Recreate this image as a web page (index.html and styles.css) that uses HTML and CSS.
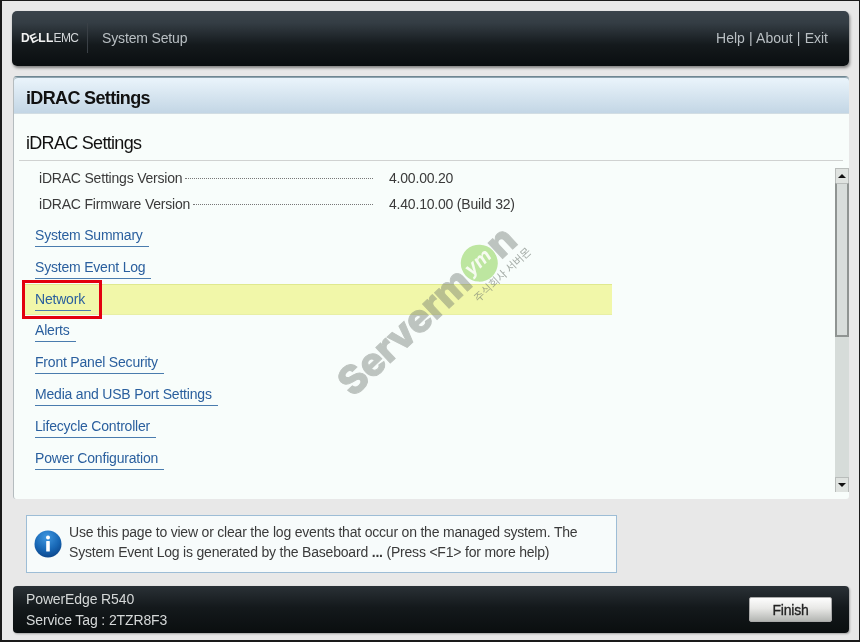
FILE: index.html
```html
<!DOCTYPE html>
<html lang="en">
<head>
<meta charset="utf-8">
<title>iDRAC Settings</title>
<link rel="stylesheet" href="styles.css">
</head>
<body>
<div class="screen">
  <header class="topbar">
    <div class="logo"><span class="logo-dell">D<span class="logo-e">E</span>LL</span><span class="logo-emc">EMC</span></div>
    <div class="app-name">System Setup</div>
    <nav class="top-links">Help | About | Exit</nav>
  </header>

  <main class="panel">
    <h1 class="panel-title">iDRAC Settings</h1>
    <h2 class="panel-heading">iDRAC Settings</h2>
    <div class="panel-scroll">
      <div class="content">
        <div class="info-row"><span class="info-label">iDRAC Settings Version</span><span class="leader"></span><span class="info-value">4.00.00.20</span></div>
        <div class="info-row"><span class="info-label">iDRAC Firmware Version</span><span class="leader"></span><span class="info-value">4.40.10.00 (Build 32)</span></div>
        <ul class="menu">
          <li class="menu-item"><a class="menu-link">System Summary</a></li>
          <li class="menu-item"><a class="menu-link">System Event Log</a></li>
          <li class="menu-item is-current"><a class="menu-link">Network</a></li>
          <li class="menu-item"><a class="menu-link">Alerts</a></li>
          <li class="menu-item"><a class="menu-link">Front Panel Security</a></li>
          <li class="menu-item"><a class="menu-link">Media and USB Port Settings</a></li>
          <li class="menu-item"><a class="menu-link">Lifecycle Controller</a></li>
          <li class="menu-item"><a class="menu-link">Power Configuration</a></li>
        </ul>
      </div>
      <div class="scrollbar">
        <div class="scroll-btn"><span class="arrow-up"></span></div>
        <div class="scroll-track"><div class="scroll-thumb"></div></div>
        <div class="scroll-btn"><span class="arrow-down"></span></div>
      </div>
    </div>
    <div class="callout-box"></div>
    <div class="watermark">
      <span class="wm-text">Serverm</span><span class="wm-circle">ym</span><span class="wm-text">n</span>
    </div>
    <div class="wm-sub">주식회사 서버몬</div>
  </main>

  <section class="help">
    <svg class="help-icon" viewBox="0 0 28 28" width="28" height="28" aria-hidden="true">
      <defs>
        <radialGradient id="ball" cx="45%" cy="25%" r="80%">
          <stop offset="0" stop-color="#3f97e0"/>
          <stop offset="0.6" stop-color="#1766b4"/>
          <stop offset="1" stop-color="#0b4286"/>
        </radialGradient>
      </defs>
      <circle cx="14" cy="14" r="13.5" fill="url(#ball)"/>
      <circle cx="14" cy="7.6" r="2" fill="#fff"/>
      <rect x="12.2" y="11" width="3.6" height="10.5" rx="0.6" fill="#fff"/>
    </svg>
    <p class="help-text">Use this page to view or clear the log events that occur on the managed system. The<br>System Event Log is generated by the Baseboard <b>...</b> (Press &lt;F1&gt; for more help)</p>
  </section>

  <footer class="bottombar">
    <div class="machine">
      <div>PowerEdge R540</div>
      <div>Service Tag : 2TZR8F3</div>
    </div>
    <button class="finish" type="button">Finish</button>
  </footer>
</div>
</body>
</html>
```
FILE: styles.css
```css
* { box-sizing: border-box; }
html, body { margin: 0; padding: 0; }
body {
  width: 860px;
  height: 642px;
  overflow: hidden;
  background: #1a1a1a;
  font-family: "Liberation Sans", Arial, sans-serif;
  font-size: 14px;
  color: #3a3a3a;
}
.screen {
  width: 857px;
  height: 639px;
  margin: 1px 0 0 2px;
  background: #e8e8e8;
  padding: 10px 10px 0 10px;
  display: flex;
  flex-direction: column;
  filter: blur(0.35px);
}
.topbar {
  height: 55px;
  flex: none;
  display: flex;
  align-items: center;
  padding: 0 21px 2px 9px;
  border-radius: 5px;
  background: linear-gradient(#3a434b 0, #343d44 22%, #14191c 62%, #0a0e10 100%);
  box-shadow: 1px 2px 3px rgba(0,0,0,.45);
}
.logo {
  width: 67px;
  height: 30px;
  display: flex;
  align-items: center;
  border-right: 1px solid #3a4046;
  font-size: 12px;
  color: #d4d7da;
  white-space: nowrap;
}
.logo-dell { font-weight: 700; letter-spacing: 0.3px; color: #f2f2f2; }
.logo-e { display: inline-block; transform: rotate(-25deg); }
.logo-emc { letter-spacing: -0.6px; }
.app-name { margin-left: 14px; color: #b9bfc3; letter-spacing: -0.15px; }
.top-links { margin-left: auto; color: #b9bfc3; word-spacing: 0.3px; }

.panel {
  position: relative;
  height: 423px;
  margin-top: 10px;
  margin-left: 1px;
  flex: none;
  background: #f8fdfb;
  border-top: 1px solid #6f8792;
  border-left: 1px solid #b5bcbf;
  border-radius: 4px 4px 3px 3px;
  display: flex;
  flex-direction: column;
}
.panel-title {
  margin: 0;
  height: 37px;
  flex: none;
  padding: 3px 0 0 12px;
  font-size: 18px;
  line-height: 34px;
  font-weight: 700;
  letter-spacing: -0.65px;
  color: #111;
  background: linear-gradient(#eaf4fb, #c3d6e5);
  border-top: 1px solid #8fa5b0;
  border-bottom: 1px solid #d2dde3;
  border-radius: 4px 4px 0 0;
}
.panel-heading {
  margin: 0 6px 0 5px;
  height: 47px;
  flex: none;
  padding: 17px 0 0 7px;
  font-size: 18px;
  line-height: 24px;
  font-weight: 400;
  letter-spacing: -0.7px;
  color: #111;
  border-bottom: 1px solid #d0d2d1;
}
.panel-scroll {
  flex: 1;
  display: flex;
  padding: 4px 0 7px 0;
  min-height: 0;
}
.content { flex: 1; min-width: 0; padding-left: 8px; letter-spacing: -0.2px; }
.info-row {
  display: flex;
  align-items: center;
  width: 352px;
  height: 26px;
  padding-left: 17px;
  line-height: 20px;
}
.info-label { white-space: nowrap; }
.leader {
  width: 0;
  flex: 1;
  margin: 0 1px 0 3px;
  border-bottom: 1px dotted #777;
}
.info-value { position: relative; left: 15px; width: 0; white-space: nowrap; }
.menu { list-style: none; margin: 0; padding: 3px 0 0; }
.menu-item {
  width: 590px;
  height: 31.8px;
  padding: 7px 0 0 13px;
}
.menu-link {
  display: inline-block;
  height: 20px;
  line-height: 16px;
  padding-right: 6px;
  border-bottom: 1.5px solid #4a7cae;
  color: #2a5f9e;
}
.is-current {
  background: #f1f7a9;
  border-top: 1px solid #dfe98f;
  border-bottom: 1px solid #e8efa5;
  padding-top: 6px;
}
.scrollbar {
  width: 14px;
  flex: none;
  margin-top: 3px;
  display: flex;
  flex-direction: column;
  background: #d6dcd9;
}
.scroll-btn {
  height: 15px;
  flex: none;
  background: #dfe3e0;
  border: 1px solid #b9bdbb;
  border-bottom: 0;
  display: flex;
  align-items: center;
  justify-content: center;
}
.scroll-track { flex: 1; }
.scroll-thumb {
  height: 154px;
  background: #d8dddb;
  border: 2px solid #8f9492;
  border-top: 1px solid #b9bdbb;
}
.arrow-up { border: 4px solid transparent; border-top: 0; border-bottom: 4px solid #111; }
.arrow-down { border: 4px solid transparent; border-bottom: 0; border-top: 4px solid #111; }

.callout-box {
  position: absolute;
  left: 8px;
  top: 203px;
  width: 80px;
  height: 39px;
  border: 3px solid #e3000f;
}
.watermark {
  position: absolute;
  left: 329px;
  top: 290px;
  display: flex;
  align-items: center;
  transform: rotate(-43deg);
  transform-origin: left center;
  font-family: Inter, "Liberation Sans", sans-serif;
  font-size: 39px;
  font-weight: 800;
  line-height: 40px;
  pointer-events: none;
  white-space: nowrap;
}
.wm-text { color: #6e7670; opacity: .42; -webkit-text-stroke: 1px #6e7670; }
.wm-circle {
  width: 37px;
  height: 37px;
  margin: 4px 0 0 0;
  border-radius: 50%;
  background: rgba(170,222,130,.75);
  color: #f6fbf0;
  font-size: 19px;
  font-weight: 700;
  font-style: italic;
  line-height: 34px;
  text-align: center;
  flex: none;
}
.wm-sub {
  position: absolute;
  left: 461px;
  top: 214px;
  transform: rotate(-43deg);
  transform-origin: left center;
  font-family: "Noto Sans CJK KR", sans-serif;
  font-size: 11px;
  color: rgba(110,118,112,.6);
  white-space: nowrap;
}

.help {
  width: 591px;
  height: 58px;
  flex: none;
  margin: 16px 0 0 14px;
  display: flex;
  align-items: center;
  background: #f7fbfb;
  border: 1px solid #9dbdd6;
  padding: 0 0 0 7px;
}
.help-icon { flex: none; }
.help-text {
  margin: 0 0 4px 7px;
  line-height: 20px;
  white-space: nowrap;
  letter-spacing: -0.2px;
}
.bottombar {
  height: 47px;
  flex: none;
  margin: 13px 0 0 1px;
  display: flex;
  align-items: center;
  justify-content: space-between;
  padding: 0 17px 0 13px;
  border-radius: 4px;
  background: linear-gradient(#2a3136 0, #14191c 45%, #0a0e0f 100%);
  box-shadow: 1px 1px 2px rgba(0,0,0,.3);
}
.machine { color: #d5d8d8; line-height: 21px; letter-spacing: -0.12px; }
.finish {
  width: 83px;
  height: 25px;
  padding: 0;
  font-family: inherit;
  font-size: 14px;
  letter-spacing: -0.2px;
  -webkit-text-stroke: 0.3px #222;
  color: #222;
  border: 1px solid #aaa;
  border-radius: 2px;
  background: linear-gradient(#fdfdfd 0, #e8e8e6 45%, #b4b6b3 100%);
}
```
